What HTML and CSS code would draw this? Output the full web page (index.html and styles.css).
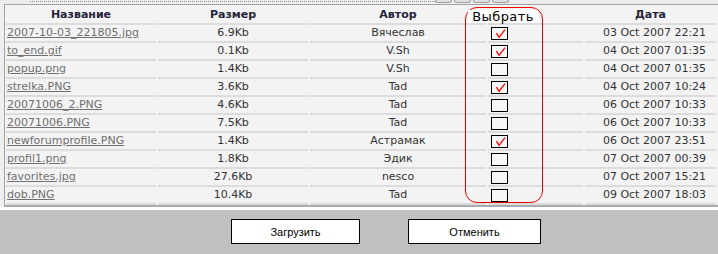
FILE: index.html
```html
<!DOCTYPE html>
<html lang="ru">

<head>
    <meta charset="UTF-8">
    <title>Файлы</title>
    <link rel="stylesheet" href="styles.css">
</head>

<body>
    <div class="topbar">
        <span class="clip-line"></span>
        <span class="tool"></span><span class="tool"></span><span class="tool"></span><span class="tool"></span>
    </div>

    <div class="panel">
        <table class="files">
            <colgroup>
                <col class="w-name">
                <col class="w-size">
                <col class="w-author">
                <col class="w-pick">
                <col class="w-date">
            </colgroup>
            <thead>
                <tr>
                    <th>Название</th>
                    <th>Размер</th>
                    <th>Автор</th>
                    <th></th>
                    <th class="date">Дата</th>
                </tr>
            </thead>
            <tbody>
                <tr>
                    <td class="name"><a href="#">2007-10-03_221805.jpg</a></td>
                    <td>6.9Kb</td>
                    <td>Вячеслав</td>
                    <td class="pick"><span class="box checked"><svg viewBox="0 0 17 13"><path d="M5 6 L8 11 L15 2"/></svg></span></td>
                    <td class="date">03 Oct 2007 22:21</td>
                </tr>
                <tr>
                    <td class="name"><a href="#">to_end.gif</a></td>
                    <td>0.1Kb</td>
                    <td>V.Sh</td>
                    <td class="pick"><span class="box checked"><svg viewBox="0 0 17 13"><path d="M5 6 L8 11 L15 2"/></svg></span></td>
                    <td class="date">04 Oct 2007 01:35</td>
                </tr>
                <tr>
                    <td class="name"><a href="#">popup.png</a></td>
                    <td>1.4Kb</td>
                    <td>V.Sh</td>
                    <td class="pick"><span class="box"></span></td>
                    <td class="date">04 Oct 2007 01:35</td>
                </tr>
                <tr>
                    <td class="name"><a href="#">strelka.PNG</a></td>
                    <td>3.6Kb</td>
                    <td>Tad</td>
                    <td class="pick"><span class="box checked"><svg viewBox="0 0 17 13"><path d="M5 6 L8 11 L15 2"/></svg></span></td>
                    <td class="date">04 Oct 2007 10:24</td>
                </tr>
                <tr>
                    <td class="name"><a href="#">20071006_2.PNG</a></td>
                    <td>4.6Kb</td>
                    <td>Tad</td>
                    <td class="pick"><span class="box"></span></td>
                    <td class="date">06 Oct 2007 10:33</td>
                </tr>
                <tr>
                    <td class="name"><a href="#">20071006.PNG</a></td>
                    <td>7.5Kb</td>
                    <td>Tad</td>
                    <td class="pick"><span class="box"></span></td>
                    <td class="date">06 Oct 2007 10:33</td>
                </tr>
                <tr>
                    <td class="name"><a href="#">newforumprofile.PNG</a></td>
                    <td>1.4Kb</td>
                    <td>Астрамак</td>
                    <td class="pick"><span class="box checked"><svg viewBox="0 0 17 13"><path d="M5 6 L8 11 L15 2"/></svg></span></td>
                    <td class="date">06 Oct 2007 23:51</td>
                </tr>
                <tr>
                    <td class="name"><a href="#">profil1.png</a></td>
                    <td>1.8Kb</td>
                    <td>Эдик</td>
                    <td class="pick"><span class="box"></span></td>
                    <td class="date">07 Oct 2007 00:39</td>
                </tr>
                <tr>
                    <td class="name"><a href="#">favorites.jpg</a></td>
                    <td>27.6Kb</td>
                    <td>nesco</td>
                    <td class="pick"><span class="box"></span></td>
                    <td class="date">07 Oct 2007 15:21</td>
                </tr>
                <tr>
                    <td class="name"><a href="#">dob.PNG</a></td>
                    <td>10.4Kb</td>
                    <td>Tad</td>
                    <td class="pick"><span class="box"></span></td>
                    <td class="date">09 Oct 2007 18:03</td>
                </tr>
            </tbody>
        </table>

        <!-- red marker drawn over the checkbox column -->
        <div class="pick-frame">
            <span class="pick-title">Выбрать</span>
        </div>
    </div>

    <div class="actions">
        <button class="btn btn-upload">Загрузить</button>
        <button class="btn btn-cancel">Отменить</button>
    </div>
</body>

</html>
```

FILE: styles.css
```css
* {
    box-sizing: border-box;
    margin: 0;
    padding: 0;
}

body {
    background: #efefef;
    font-family: 'DejaVu Sans', Verdana, sans-serif;
    font-size: 11px;
    color: #333;
    width: 718px;
    height: 254px;
    overflow: hidden;
}

/* clipped toolbar above the list */
.topbar {
    height: 4px;
    overflow: hidden;
    display: flex;
    align-items: flex-start;
    background: #ececec;
}

.clip-line {
    margin: 1px 0 0 30px;
    width: 405px;
    height: 1px;
    border-top: 1px dotted #9a8aa8;
}

.tool {
    width: 17px;
    height: 3px;
    margin-right: 2px;
    border: 1px solid #a0a0a0;
    border-top: none;
    border-radius: 0 0 6px 6px;
    background: #e0e0e0;
}

.panel {
    position: relative;
    margin-left: 4px;
    background: #f3f3f3;
    border-left: 1px solid #a3a3a3;
    border-top: 1px solid #a3a3a3;
    border-bottom: 2px solid #ababab;
}

.files {
    table-layout: fixed;
    width: 714px;
    margin-left: -1px;
    border-collapse: separate;
    border-spacing: 2px 0;
}

.w-name { width: 150px; }
.w-size { width: 150px; }
.w-author { width: 176px; }
.w-pick { width: 95px; }
.w-date { width: 131px; }

.files th,
.files td {
    height: 18px;
    line-height: 16px;
    padding: 0 2px;
    text-align: center;
    white-space: nowrap;
    border-bottom: 2px solid #dcdcdc;
    vertical-align: middle;
}

.files th {
    height: 20px;
    padding-top: 2px;
    font-weight: bold;
    color: #23233a;
}

.files td.name {
    text-align: left;
    padding-left: 1px;
}

.files td.name a {
    color: #707070;
    text-decoration: underline;
}

.files td.pick {
    text-align: left;
    padding-left: 3px;
    line-height: 0;
}

.files td.date {
    padding-left: 10px;
}

.box {
    display: inline-block;
    width: 17px;
    height: 13px;
    border: 1px solid #000;
    background: #f7f7f7;
    vertical-align: middle;
}

.box svg {
    display: block;
    width: 15px;
    height: 11px;
    overflow: visible;
}

.box svg path {
    fill: none;
    stroke: #f00;
    stroke-width: 1.6;
}

.pick-frame {
    position: absolute;
    left: 460px;
    top: 2px;
    width: 78px;
    height: 196px;
    border: 1px solid #ee0000;
    border-radius: 12px;
}

.pick-title {
    position: absolute;
    left: 2px;
    top: 2px;
    width: 70px;
    height: 13px;
    background: #fff;
    color: #000;
    font-size: 13px;
    line-height: 14px;
    letter-spacing: 0.4px;
    text-align: center;
}

.actions {
    border-top: 3px solid #fff;
    background: #c0c0c0;
    height: 47px;
    display: flex;
    gap: 48px;
    padding: 9px 0 0 231px;
}

.btn {
    height: 25px;
    background: #fff;
    border: 1px solid #000;
    font-family: 'Liberation Sans', Arial, sans-serif;
    font-size: 11px;
    color: #000;
}

.btn-upload {
    width: 129px;
}

.btn-cancel {
    width: 133px;
}
```
